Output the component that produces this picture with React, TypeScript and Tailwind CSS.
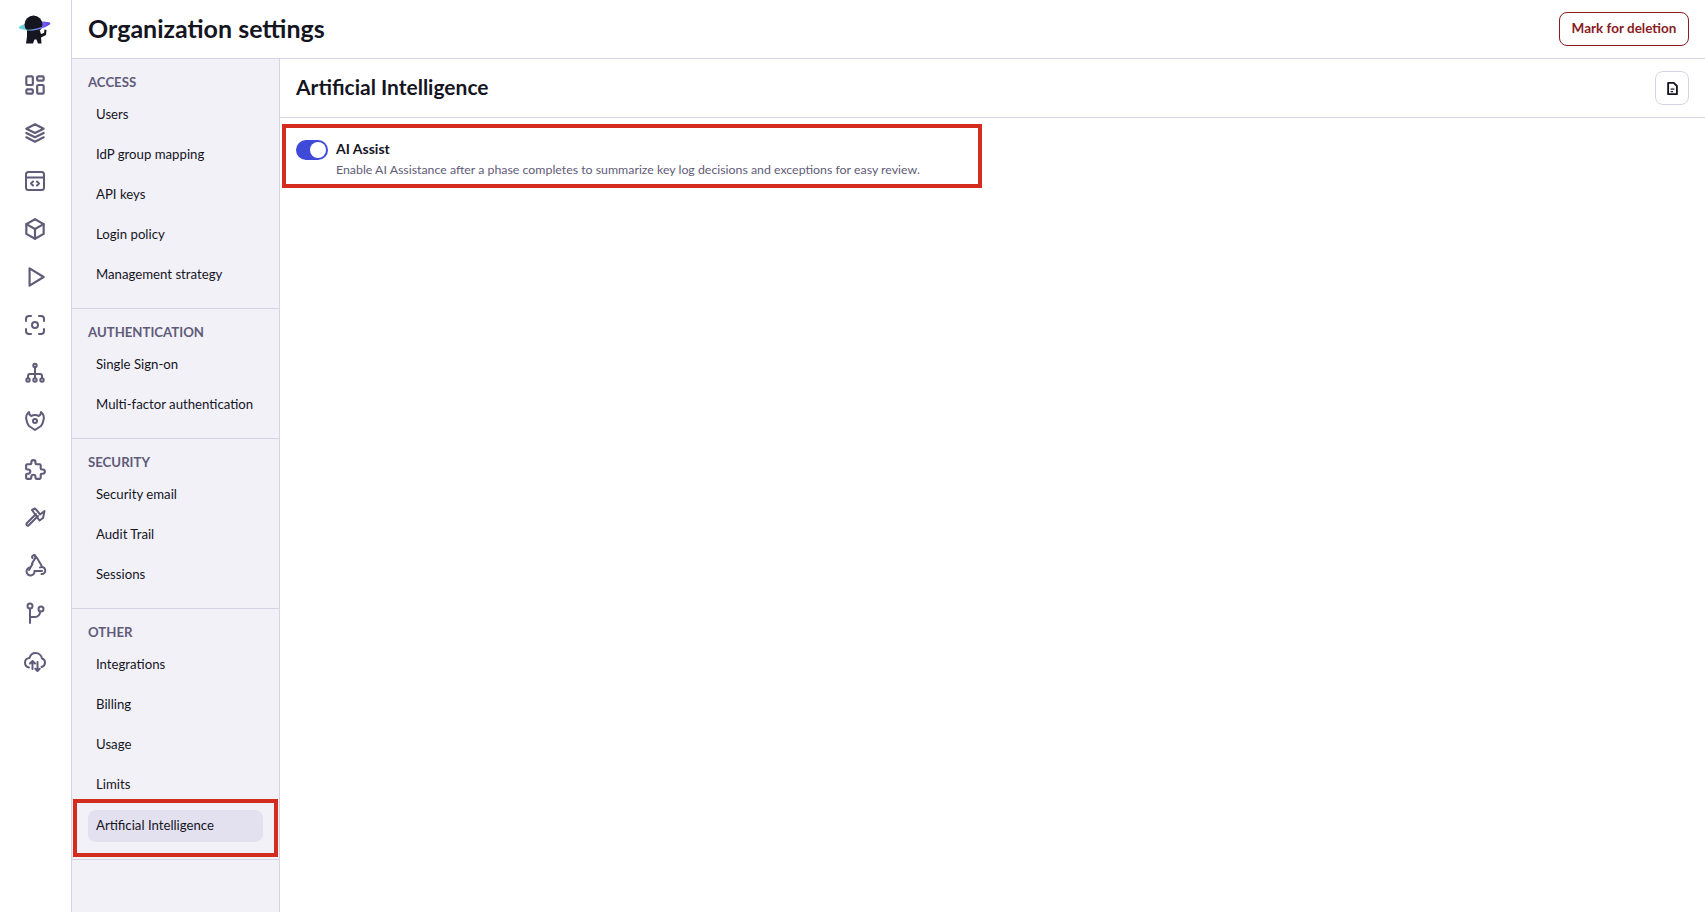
import React, { useState } from 'react';
import {
  TbLayoutDashboard, TbStack2, TbBox, TbPlayerPlay, TbPuzzle,
} from 'react-icons/tb';

const iconStroke = {
  fill: 'none',
  stroke: 'currentColor',
  strokeWidth: 2,
  strokeLinecap: 'round' as const,
  strokeLinejoin: 'round' as const,
};

const CodeWindow = () => (
  <svg width="24" height="24" viewBox="0 0 24 24" {...iconStroke}>
    <rect x="3" y="3" width="18" height="18" rx="2.5" />
    <path d="M3 8.500h18" />
    <path d="M10 12.500l-2 2 2 2M14 12.500l2 2-2 2" />
  </svg>
);

const ScanEye = () => (
  <svg width="24" height="24" viewBox="0 0 24 24" {...iconStroke}>
    <path d="M3 8V6a3 3 0 0 1 3-3h2M16 3h2a3 3 0 0 1 3 3v2M21 16v2a3 3 0 0 1-3 3h-2M8 21H6a3 3 0 0 1-3-3v-2" />
    <circle cx="12" cy="12" r="3" />
  </svg>
);

const Hierarchy = () => (
  <svg width="24" height="24" viewBox="0 0 24 24" {...iconStroke}>
    <circle cx="12" cy="4.500" r="1.700" />
    <circle cx="5" cy="19" r="1.700" />
    <circle cx="12" cy="19" r="1.700" />
    <circle cx="19" cy="19" r="1.700" />
    <path d="M12 6.500v10.500M5 17v-2a2 2 0 0 1 2-2h10a2 2 0 0 1 2 2v2" />
  </svg>
);

const HornShield = () => (
  <svg width="24" height="24" viewBox="0 0 24 24" {...iconStroke}>
    <path d="M6 3C3.500 5 2.500 7.500 3.500 11c.5 2.500 1 4.500 2.500 6l6 4 6-4c1.500-1.500 2-3.500 2.500-6 1-3.500 0-6-2.500-8 0 2-1 3.500-2.500 4-1-.8-2-1-3.500-1s-2.500.2-3.500 1C7 6.500 6 5 6 3z" />
    <circle cx="12" cy="12" r="2" />
  </svg>
);

const Hammer = () => (
  <svg width="24" height="24" viewBox="0 0 24 24" {...iconStroke}>
    <path d="M13 9L3.500 18.500a1.500 1.500 0 0 0 2 2L15 11" />
    <path d="M9 5l3-1.500c2 2 4 4 5 6l4.500-3.500-1.500 7-3.500 2.500L9 5z" />
  </svg>
);

const Webhook = () => (
  <svg width="24" height="24" viewBox="0 0 24 24" {...iconStroke}>
    <path d="M9 10.500L12 5.500a1.800 1.800 0 1 0-2.500-.5" />
    <path d="M12 3.500c2 .5 2.500 2 3.500 4l3 5" />
    <path d="M7 14.500a4 4 0 1 0 4.500 3.500h7.500" />
    <path d="M17 14.500a3.500 3.500 0 1 1 1.500 6.500" />
    <path d="M9.500 11L6 17" />
  </svg>
);

const GitFork = () => (
  <svg width="24" height="24" viewBox="0 0 24 24" {...iconStroke}>
    <circle cx="7" cy="5" r="2.500" />
    <circle cx="18" cy="8" r="2.500" />
    <path d="M7 7.500V22M7 16h5a5 5 0 0 0 5-5.500" />
  </svg>
);

const CloudSync = () => (
  <svg width="24" height="24" viewBox="0 0 24 24" {...iconStroke}>
    <path d="M6 18.500C3.500 18 2 16 2 13.500 2 11 4 9 6.500 9 7.500 5.500 10 4 12.500 4c3.500 0 6 2.500 6.500 5.500 2 .5 3 2.200 3 4 0 2-1.200 3.800-3.500 4.500" />
    <path d="M9.500 20v-8M7 14.500L9.500 12l2.500 2.500" />
    <path d="M14.500 13v9M12.300 19.800l2.200 2.200 2.200-2.200" />
  </svg>
);

const railIcons: React.ReactNode[] = [
  <TbLayoutDashboard size={26} />,
  <TbStack2 size={26} />,
  <CodeWindow />,
  <TbBox size={26} />,
  <TbPlayerPlay size={26} />,
  <ScanEye />,
  <Hierarchy />,
  <HornShield />,
  <TbPuzzle size={25} />,
  <Hammer />,
  <Webhook />,
  <GitFork />,
  <CloudSync />,
];

const sections = [
  { title: 'ACCESS', items: ['Users', 'IdP group mapping', 'API keys', 'Login policy', 'Management strategy'] },
  { title: 'AUTHENTICATION', items: ['Single Sign-on', 'Multi-factor authentication'] },
  { title: 'SECURITY', items: ['Security email', 'Audit Trail', 'Sessions'] },
  { title: 'OTHER', items: ['Integrations', 'Billing', 'Usage', 'Limits', 'Artificial Intelligence'] },
];

const Logo = () => (
  <svg width="36" height="32" viewBox="0 0 36 32">
    <defs>
      <linearGradient id="ring" x1="0" x2="1" y1="0" y2="0">
        <stop offset="0" stopColor="#6fe3d6" />
        <stop offset="0.5" stopColor="#6f8fe8" />
        <stop offset="1" stopColor="#6a3df0" />
      </linearGradient>
    </defs>
    <ellipse cx="17.500" cy="11.500" rx="16" ry="3.200" fill="url(#ring)" transform="rotate(-8 17.500 11.500)" />
    <circle cx="16.500" cy="10.500" r="9" fill="#15151f" />
    <path d="M10 17h13l1 3 3-1 .5-3.500 2 .5-.5 5-5 2.500.5 6h-3.500l-1.500-4h-2l-1.500 4H9l1-7z" fill="#15151f" />
    <path d="M3 14c6 3 18 2 27-4 1 0 2 0 3 0-7 6-22 9-30 4z" fill="url(#ring)" />
  </svg>
);

const App = () => {
  const [enabled, setEnabled] = useState(true);

  return (
    <div className="flex h-[912px] w-[1705px] overflow-hidden bg-white text-[#15151f] font-['Lato','Open_Sans',sans-serif]">
      {/* Icon rail */}
      <div className="flex w-[72px] shrink-0 flex-col items-center border-r border-[#d6d4e4] pr-[1px] pt-[14px] text-[#5f5b78]">
        <div className="mb-[24px] flex h-[32px] w-[36px] items-center justify-center">
          <Logo />
        </div>
        <div className="flex flex-col gap-[18px]">
          {railIcons.map((icon, idx) => (
            <div key={idx} className="flex h-[30px] w-[30px] items-center justify-center">
              {icon}
            </div>
          ))}
        </div>
      </div>

      <div className="flex min-w-0 flex-1 flex-col">
        {/* Header */}
        <div className="flex h-[59px] shrink-0 items-center justify-between border-b border-[#d6d4e4] pl-[16px] pr-[16px]">
          <h1 className="pb-[1px] text-[25px] font-bold leading-none">Organization settings</h1>
          <button className="h-[34px] w-[130px] rounded-lg border border-[#8a1c1f] pb-[2px] text-[13.500px] font-bold text-[#8a1c1f]">
            Mark for deletion
          </button>
        </div>

        <div className="flex min-h-0 flex-1">
          {/* Settings nav */}
          <div className="relative w-[208px] shrink-0 border-r border-[#d6d4e4] bg-[#f2f1f8]">
            {sections.map((section) => (
              <div key={section.title} className="border-b border-[#d6d4e4] pb-[17px] pt-[12px] last:pb-[15px] last:pt-[13px]">
                <div className="px-[16px] text-[13.200px] font-bold leading-[22px] text-[#5f5b78]">{section.title}</div>
                <div className="mt-[6px] flex flex-col gap-[8px] px-[16px]">
                  {section.items.map((item) => (
                    <div
                      key={item}
                      className={`flex h-[32px] items-center whitespace-nowrap rounded-lg px-[8px] text-[13.200px] ${
                        item === 'Artificial Intelligence' ? 'mt-[1px] bg-[#e3e1ef]' : ''
                      }`}
                    >
                      {item}
                    </div>
                  ))}
                </div>
              </div>
            ))}
            {/* Annotation around the selected item */}
            <div className="absolute left-[1px] top-[740px] h-[58px] w-[205px] border-4 border-[#d22d1f]" />
          </div>

          {/* Content */}
          <div className="flex min-w-0 flex-1 flex-col">
            <div className="flex h-[59px] shrink-0 items-center justify-between border-b border-[#d6d4e4] pl-[16px] pr-[16px]">
              <h2 className="pb-[4px] text-[21px] font-bold leading-none">Artificial Intelligence</h2>
              <button className="flex h-[34px] w-[34px] items-center justify-center rounded-lg border border-[#d6d4e4]">
                <svg width="15" height="15" viewBox="0 0 24 24" fill="none" stroke="#15151f" strokeWidth="3" strokeLinejoin="round">
                  <path d="M5 3h9l5 5v13H5z" />
                  <path d="M9 13h6M9 17h4" strokeWidth="2" />
                </svg>
              </button>
            </div>
            <div className="ml-[2px] mt-[6px] flex h-[64px] w-[700px] items-start gap-[8px] border-4 border-[#d22d1f] pl-[10px] pt-[11px]">
              <button
                onClick={() => setEnabled(!enabled)}
                className={`mt-[1px] flex h-[20px] w-[32px] shrink-0 items-center rounded-full bg-[#3f4bd8] px-[2px] ${
                  enabled ? 'justify-end' : 'justify-start'
                }`}
              >
                <span className="h-[16px] w-[16px] rounded-full bg-white" />
              </button>
              <div>
                <div className="text-[14px] font-bold leading-[20px]">AI Assist</div>
                <div className="mt-[2px] whitespace-nowrap text-[12.350px] leading-[17px] text-[#5f5b78]">
                  Enable AI Assistance after a phase completes to summarize key log decisions and exceptions for easy review.
                </div>
              </div>
            </div>
          </div>
        </div>
      </div>
    </div>
  );
};

export default App;
